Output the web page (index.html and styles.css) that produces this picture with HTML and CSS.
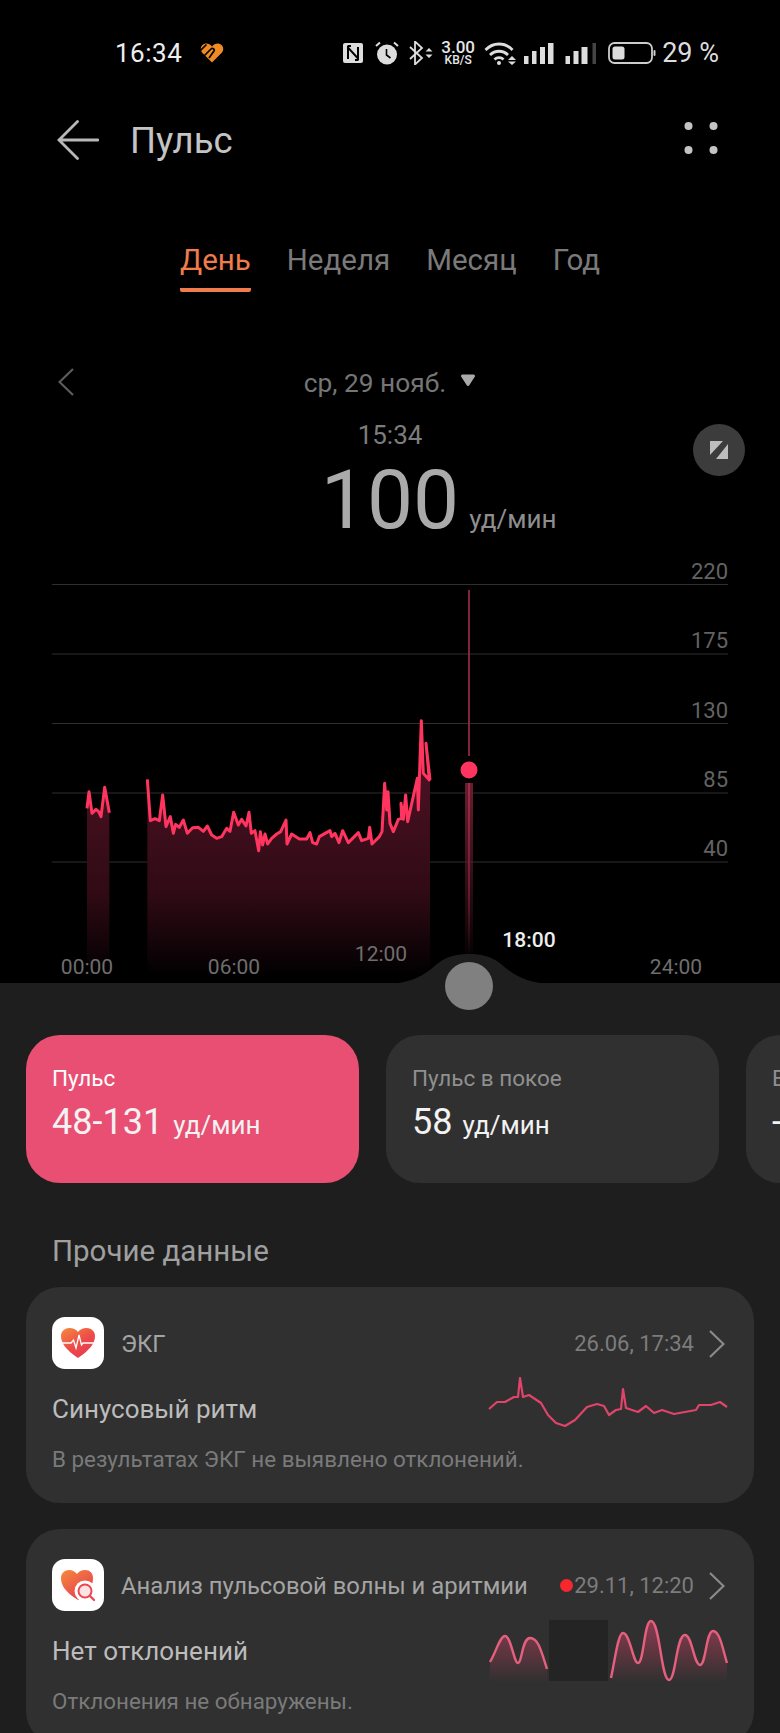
FILE: index.html
```html
<!DOCTYPE html>
<html lang="ru">
<head>
<meta charset="utf-8">
<title>Пульс</title>
<link rel="stylesheet" href="styles.css">
</head>
<body>
<div class="screen">
  <div class="status">
    <div class="status-left">
      <span class="clock">16:34</span>
      <svg class="ic-brand" viewBox="0 0 24 20"><path fill="#f08a24" d="M12 19.500 2 9.500C-.6 6.500 1 1.200 5.600.6 8 .3 10.400 1.500 12 3.500 13.600 1.500 16 .3 18.400.6 23 1.200 24.600 6.500 22 9.500Z"/><path fill="none" stroke="#000" stroke-width="1.700" d="M0 8 6.500 1.500M4 13 11 6C12.500 4.500 15 6 14 8L9 15"/></svg>
    </div>
    <div class="status-right">
      <svg class="ic-nfc" viewBox="0 0 20 22"><rect y="1" width="20" height="20" rx="2" fill="#ddd"/><path fill="none" stroke="#000" stroke-width="2" d="M5 17V5.500L15 16.500V5M8 4H5M15 18h-3"/></svg>
      <svg class="ic-alarm" viewBox="0 0 24 24"><circle cx="12" cy="13.500" r="10" fill="#ddd"/><path fill="none" stroke="#ddd" stroke-width="2" d="M1 5 5 1.500M23 5 19 1.500"/><path fill="none" stroke="#000" stroke-width="1.600" d="M11.500 8v6l4 3"/></svg>
      <svg class="ic-bt" viewBox="0 0 24 24"><path fill="none" stroke="#ddd" stroke-width="1.800" d="M1 6 13 17 6 23.500V.5L13 7 1 18"/><path fill="#ddd" d="M16.500 10.500 20 7l3.500 3.500ZM16.500 13.500h7L20 17Z"/></svg>
      <div class="speed"><span class="speed-n">3.00</span><span class="speed-u">KB/S</span></div>
      <svg class="ic-wifi" viewBox="0 0 33 24"><g fill="none" stroke="#ddd" stroke-width="2.800"><path d="M1.500 9C9 1 21 1 28.500 9"/><path d="M6 14c5-5 13-5 18 0"/><path d="M10.500 18.500c2.500-2.500 6.500-2.500 9 0"/></g><circle cx="15" cy="22" r="2" fill="#ddd"/><path fill="#ddd" d="M24 19h8l-4-4ZM24 20.500h8l-4 3.500Z"/></svg>
      <svg class="ic-sim" viewBox="0 0 30 24"><path fill="#ddd" d="M0 15h4.500v8H0ZM8 10h4.500v13H8ZM16 6h5v17h-5ZM24 2h5.500v21H24Z"/></svg>
      <svg class="ic-sim2" viewBox="0 0 30 24"><path fill="#ddd" d="M0 15h4.500v8H0ZM8 10h5v13H8ZM16 6h6v17h-6Z"/><path fill="#444" d="M27 2h4v21h-4Z"/></svg>
      <svg class="ic-batt" viewBox="0 0 48 24"><rect x="1" y="2" width="43" height="20" rx="5.500" fill="none" stroke="#ccc" stroke-width="1.800"/><rect x="4.500" y="5.500" width="12" height="13" rx="2.500" fill="#ddd"/><rect x="45.500" y="9" width="2" height="6" rx="1" fill="#ccc"/></svg>
      <span class="pct">29 %</span>
    </div>
  </div>

  <header class="appbar">
    <svg class="ic-back" viewBox="0 0 42 40"><path fill="none" stroke="#b8b8b8" stroke-width="2.800" stroke-linecap="round" d="M41 20H2M20.500 1.500 2 20l18.500 18.500"/></svg>
    <h1 class="title">Пульс</h1>
    <svg class="ic-more" viewBox="0 0 34 32"><g fill="#c4c4c4"><circle cx="4.500" cy="4" r="4"/><circle cx="29.500" cy="4" r="4"/><circle cx="4.500" cy="28" r="4"/><circle cx="29.500" cy="28" r="4"/></g></svg>
  </header>

  <nav class="tabs">
    <span class="tab tab-on">День</span>
    <span class="tab">Неделя</span>
    <span class="tab">Месяц</span>
    <span class="tab">Год</span>
  </nav>

  <section class="hero">
    <div class="date-row">
      <svg class="ic-prev" viewBox="0 0 16 28"><path fill="none" stroke="#5c5c5c" stroke-width="2.200" d="M15 1 1.500 14 15 27"/></svg>
      <span class="date">ср, 29 нояб.<svg class="ic-tri" viewBox="0 0 16 13"><path fill="#aaa" stroke="#aaa" stroke-width="3" stroke-linejoin="round" d="M2.500 2h11L8 10.500Z"/></svg></span>
    </div>
    <div class="time">15:34</div>
    <div class="reading">
      <span class="reading-n">100</span>
      <span class="reading-u">уд/мин</span>
    </div>
    <button class="toggle" type="button" aria-label="Развернуть">
      <svg class="ic-toggle" viewBox="0 0 20 18"><path fill="#bdbdbd" d="M1 0h13L1 14ZM19 3v15H7Z"/></svg>
    </button>
  </section>

  <div class="chart">
    <svg class="chart-svg" viewBox="0 560 780 450">
      <defs>
        <linearGradient id="areaGrad" gradientUnits="userSpaceOnUse" x1="0" y1="250" x2="0" y2="860">
          <stop offset="0" stop-color="#4a1122"/>
          <stop offset=".6" stop-color="#2f0a15"/>
          <stop offset="1" stop-color="#2f0a15" stop-opacity="0"/>
        </linearGradient>
        <linearGradient id="barGrad" gradientUnits="userSpaceOnUse" x1="0" y1="783" x2="0" y2="955">
          <stop offset="0" stop-color="#6a1d30"/>
          <stop offset="1" stop-color="#6a1d30" stop-opacity=".05"/>
        </linearGradient>
        <linearGradient id="barCore" gradientUnits="userSpaceOnUse" x1="0" y1="783" x2="0" y2="955">
          <stop offset="0" stop-color="#a02c48"/>
          <stop offset=".6" stop-color="#6a1d30"/>
          <stop offset="1" stop-color="#6a1d30" stop-opacity="0"/>
        </linearGradient>
      </defs>
      <g stroke="#2e2e2e" stroke-width="1.200">
        <path d="M52 584.500H728M52 654H728M52 723.500H728M52 793H728M52 862H728"/>
      </g>
      <g class="axis-y" text-anchor="end">
        <text x="728" y="579">220</text>
        <text x="728" y="648">175</text>
        <text x="728" y="718">130</text>
        <text x="728" y="787">85</text>
        <text x="728" y="856">40</text>
      </g>
      <g transform="translate(40 690) scale(.33333)">
        <path fill="url(#areaGrad)" d="M141 355 147 305 156 370 168 358 176 365 183 380 194 292 208 368V850H141Z"/>
        <path fill="url(#areaGrad)" d="M322 268 331 392 345 386 358 392 368 315 378 410 391 380 400 430 407 403 418 412 430 390 442 430 458 413 475 412 490 424 502 408 515 435 530 445 545 440 560 415 570 424 581 367 595 405 605 388 618 408 627 367 634 430 645 422 656 482 661 425 668 465 675 432 683 462 695 445 710 432 722 425 738 390 741 462 755 432 778 447 800 447 810 428 818 458 830 462 838 440 870 422 875 440 885 430 897 458 908 422 925 458 955 428 965 452 985 445 989 412 996 462 1018 440 1026 425 1034 280 1040 360 1044 305 1050 400 1060 425 1075 388 1085 385 1083 340 1090 388 1097 315 1103 395 1132 265 1135 360 1144 92 1150 250 1168 270 1158 160 1170 270V850H322Z"/>
        <g fill="none" stroke="#ff3560" stroke-width="9" stroke-linejoin="round">
          <path d="M141 355 147 305 156 370 168 358 176 365 183 380 194 292 208 368"/>
          <path d="M322 268 331 392 345 386 358 392 368 315 378 410 391 380 400 430 407 403 418 412 430 390 442 430 458 413 475 412 490 424 502 408 515 435 530 445 545 440 560 415 570 424 581 367 595 405 605 388 618 408 627 367 634 430 645 422 656 482 661 425 668 465 675 432 683 462 695 445 710 432 722 425 738 390 741 462 755 432 778 447 800 447 810 428 818 458 830 462 838 440 870 422 875 440 885 430 897 458 908 422 925 458 955 428 965 452 985 445 989 412 996 462 1018 440 1026 425 1034 280 1040 360 1044 305 1050 400 1060 425 1075 388 1085 385 1083 340 1090 388 1097 315 1103 395 1132 265 1135 360 1144 92 1150 250 1168 270 1158 160 1170 270"/>
        </g>
      </g>
      <path d="M469 590V756" stroke="#b02e4c" stroke-width="1.500"/>
      <circle cx="469" cy="770" r="8.500" fill="#ff3560"/>
      <rect x="465" y="783" width="8" height="172" fill="url(#barGrad)"/>
      <rect x="468" y="783" width="2" height="172" fill="url(#barCore)"/>
      <path d="M385 984C410 984 425 975 437 964 447 956 458 954 469 954 480 954 491 956 501 964 513 975 528 984 553 984Z" fill="#1e1e1e"/>
      <circle cx="469" cy="986" r="24" fill="#808080"/>
      <g class="axis-x" text-anchor="middle">
        <text x="87" y="974">00:00</text>
        <text x="234" y="974">06:00</text>
        <text x="381" y="961">12:00</text>
        <text class="axis-now" x="529" y="947">18:00</text>
        <text x="676" y="974">24:00</text>
      </g>
    </svg>
  </div>

  <main class="panel">
    <div class="stats">
      <div class="stat stat-on">
        <div class="stat-label">Пульс</div>
        <div class="stat-value">48-131<span class="stat-unit">уд/мин</span></div>
      </div>
      <div class="stat">
        <div class="stat-label">Пульс в покое</div>
        <div class="stat-value">58<span class="stat-unit">уд/мин</span></div>
      </div>
      <div class="stat">
        <div class="stat-label">Вариабельность</div>
        <div class="stat-value">--</div>
      </div>
    </div>

    <h2 class="section">Прочие данные</h2>

    <article class="card">
      <div class="card-head">
        <span class="app-icon">
          <svg viewBox="0 0 52 52">
            <defs><linearGradient id="h1" x1="0" y1="0" x2="0.7" y2="1"><stop offset="0" stop-color="#f58a3c"/><stop offset=".6" stop-color="#ec4a4a"/><stop offset="1" stop-color="#e73c50"/></linearGradient></defs>
            <path fill="url(#h1)" d="M26 41C14 33 9 26 9 19 9 14 13 11 17.500 11 21 11 24 12.500 26 15 28 12.500 31 11 34.500 11 39 11 43 14 43 19 43 26 38 33 26 41Z"/>
            <path fill="none" stroke="#fff" stroke-width="1.300" d="M10 26h9l2.500-3 2.500 8 3-13 2.500 10 1.500-2H42"/>
          </svg>
        </span>
        <span class="card-title">ЭКГ</span>
        <span class="card-date">26.06, 17:34</span>
        <svg class="ic-next" viewBox="0 0 16 28"><path fill="none" stroke="#8a8a8a" stroke-width="2.200" d="M1 1 14.500 14 1 27"/></svg>
      </div>
      <div class="card-row">
        <span class="card-main">Синусовый ритм</span>
        <svg class="spark" viewBox="485 1377 245 64"><path fill="none" stroke="#e0446a" stroke-width="2.200" stroke-linejoin="round" d="M489 1409 497 1402 505 1402 514 1397 518 1397 520 1378 523 1397 529 1395 541 1403 548 1415 556 1423 565 1426 575 1420 587 1407 597 1404 604 1406 609 1415 616 1410 621 1409 623 1389 626 1408 638 1412 646 1406 654 1413 662 1410 674 1414 696 1410 699 1405 711 1405 720 1402 727 1407"/></svg>
      </div>
      <p class="card-sub">В результатах ЭКГ не выявлено отклонений.</p>
    </article>

    <article class="card">
      <div class="card-head">
        <span class="app-icon">
          <svg viewBox="0 0 52 52">
            <defs><linearGradient id="h2" x1="0" y1="0" x2="0.7" y2="1"><stop offset="0" stop-color="#f58a3c"/><stop offset="1" stop-color="#e73c50"/></linearGradient></defs>
            <path fill="url(#h2)" d="M26 41C13 33 9 26 9 19 9 14 13 11 17 11 20.500 11 22.500 12.500 25 15 27 12.500 29.500 11 33 11 38 11 41 14 41 19 41 26 38 33 26 41Z"/>
            <circle cx="33" cy="32" r="10.500" fill="#fff"/>
            <circle cx="33" cy="32" r="6.500" fill="#fde3e3" stroke="#e9484f" stroke-width="2"/>
            <path stroke="#e9484f" stroke-width="2.400" stroke-linecap="round" d="M38 37 42 41"/>
          </svg>
        </span>
        <span class="card-title">Анализ пульсовой волны и аритмии</span>
        <span class="card-date card-date-new">29.11, 12:20</span>
        <svg class="ic-next" viewBox="0 0 16 28"><path fill="none" stroke="#8a8a8a" stroke-width="2.200" d="M1 1 14.500 14 1 27"/></svg>
      </div>
      <div class="card-row">
        <span class="card-main">Нет отклонений</span>
        <svg class="spark" viewBox="485 1619 245 64">
          <defs><linearGradient id="waveGrad" gradientUnits="userSpaceOnUse" x1="0" y1="1625" x2="0" y2="1682"><stop offset="0" stop-color="#e0446a" stop-opacity=".5"/><stop offset="1" stop-color="#e0446a" stop-opacity="0"/></linearGradient></defs>
          <path fill="url(#waveGrad)" d="M490 1662C496 1652 500 1636 505 1636 511 1636 514 1663 518 1663 522 1663 522 1638 530 1638 538 1638 541 1650 547 1669V1682H490Z"/>
          <path fill="url(#waveGrad)" d="M611 1678C615 1660 618 1633 623 1633 630 1633 633 1663 638 1663 644 1663 644 1621 651 1621 660 1621 661 1680 669 1680 676 1680 676 1635 685 1635 692 1635 694 1665 700 1665 706 1665 706 1631 713 1631 720 1631 723 1650 727 1663V1682H611Z"/>
          <g fill="none" stroke="#e5607f" stroke-width="2.400">
            <path d="M490 1662C496 1652 500 1636 505 1636 511 1636 514 1663 518 1663 522 1663 522 1638 530 1638 538 1638 541 1650 547 1669"/>
            <path d="M611 1678C615 1660 618 1633 623 1633 630 1633 633 1663 638 1663 644 1663 644 1621 651 1621 660 1621 661 1680 669 1680 676 1680 676 1635 685 1635 692 1635 694 1665 700 1665 706 1665 706 1631 713 1631 720 1631 723 1650 727 1663"/>
          </g>
          <rect x="549" y="1620" width="59" height="61" fill="#242424"/>
        </svg>
      </div>
      <p class="card-sub">Отклонения не обнаружены.</p>
    </article>
  </main>
</div>
</body>
</html>
```

FILE: styles.css
```css
* { box-sizing: border-box; }
html, body { margin: 0; padding: 0; background: #000; }
body { font-family: Roboto, "Noto Sans", sans-serif; color: #ddd; }
svg { display: block; }

.screen { width: 780px; height: 1733px; overflow: hidden; background: #000; }

/* status bar */
.status { display: flex; justify-content: space-between; align-items: center; height: 24px; margin-top: 41px; padding: 0 61px 0 115px; }
.status-left { display: flex; align-items: center; }
.status-right { display: flex; align-items: center; }
.clock { font-size: 26px; line-height: 24px; letter-spacing: .5px; color: #eee; }
.ic-brand { width: 24px; height: 20px; margin-left: 18px; }
.ic-nfc { width: 20px; height: 22px; }
.ic-alarm { width: 24px; height: 24px; margin-left: 12px; }
.ic-bt { width: 24px; height: 24px; margin-left: 10px; }
.speed { display: flex; flex-direction: column; align-items: center; width: 38px; margin-left: 6px; color: #e6e6e6; }
.speed-n { font-size: 17px; line-height: 14px; font-weight: 500; }
.speed-u { font-size: 12px; line-height: 12px; font-weight: 500; }
.ic-wifi { width: 33px; height: 24px; margin-left: 7px; }
.ic-sim { width: 30px; height: 24px; margin-left: 7px; }
.ic-sim2 { width: 31px; height: 24px; margin-left: 11px; }
.ic-batt { width: 48px; height: 24px; margin-left: 12px; }
.pct { font-size: 27px; line-height: 24px; margin-left: 6px; color: #ddd; white-space: nowrap; }

/* app bar */
.appbar { display: flex; align-items: center; height: 44px; margin-top: 53px; padding: 0 62px 0 57px; }
.ic-back { width: 42px; height: 40px; }
.title { flex: 1; margin: 2px 0 0 31px; font-size: 36.5px; line-height: 44px; font-weight: 400; color: #c4c4c4; }
.ic-more { width: 34px; height: 32px; margin-top: -4px; }

/* tabs */
.tabs { display: flex; justify-content: center; gap: 36px; margin-top: 80px; }
.tab { font-size: 29.5px; line-height: 36px; height: 50px; color: #7a7a7a; }
.tab-on { color: #f07c4d; background: linear-gradient(#f07c4d, #f07c4d) no-repeat bottom / 100% 4px; border-radius: 2px; }

/* hero */
.hero { position: relative; }
.date-row { position: relative; display: flex; justify-content: center; align-items: center; height: 32px; margin-top: 75px; }
.ic-prev { position: absolute; left: 58px; top: 1px; width: 16px; height: 28px; }
.date { display: flex; align-items: center; gap: 14px; font-size: 26.3px; line-height: 32px; color: #757575; }
.ic-tri { width: 16px; height: 13px; margin-top: -6px; }
.time { margin-top: 19px; font-size: 26px; line-height: 34px; text-align: center; color: #7c7c7c; }
.reading { display: grid; grid-template-columns: 1fr auto 1fr; align-items: baseline; height: 84px; margin-top: 6px; line-height: 84px; }
.reading-n { grid-column: 2; font-size: 82px; font-weight: 400; color: #aaa; }
.reading-u { grid-column: 3; margin-left: 10px; font-size: 26px; color: #8e8e8e; }
.toggle { position: absolute; top: 57px; right: 35px; display: flex; align-items: center; justify-content: center; width: 52px; height: 52px; padding: 0; border: 0; border-radius: 50%; background: #3c3c3c; }
.ic-toggle { width: 20px; height: 18px; }

/* chart */
.chart { position: relative; height: 441px; }
.chart-svg { position: absolute; left: 0; top: 18px; z-index: 2; width: 780px; height: 450px; }
.axis-y text { font-size: 22px; fill: #636363; font-family: Roboto, sans-serif; }
.axis-x text { font-size: 21px; fill: #6e6e6e; font-family: Roboto, sans-serif; }
.axis-x .axis-now { fill: #eee; font-weight: 500; }

/* panel */
.panel { height: 750px; padding-top: 52px; background: #1e1e1e; overflow: hidden; }
.stats { display: flex; gap: 27px; padding-left: 26px; width: 780px; overflow: hidden; }
.stat { flex: 0 0 333px; height: 148px; padding: 29px 26px 0; border-radius: 34px; background: #303030; }
.stat-on { background: #e84f72; }
.stat-label { font-size: 22.5px; line-height: 28px; color: #8f8f8f; white-space: nowrap; }
.stat-on .stat-label { color: #fff; }
.stat-value { margin-top: 8px; font-size: 36px; line-height: 44px; color: #f2f2f2; }
.stat-unit { margin-left: 10px; font-size: 26px; }
.section { margin: 50px 0 18px 52px; font-size: 29.5px; line-height: 36px; font-weight: 400; color: #a0a0a0; }
.card { height: 216px; margin: 0 26px 26px; padding: 30px 24px 0 26px; border-radius: 34px; background: #303030; }
.card-head { display: flex; align-items: center; height: 52px; }
.app-icon { flex: none; width: 52px; height: 52px; border-radius: 13px; background: #fff; overflow: hidden; }
.card-title { flex: 1; margin: 2px 0 0 17px; font-size: 23.8px; line-height: 32px; color: #a4a4a4; white-space: nowrap; }
.card-date { position: relative; font-size: 22px; line-height: 30px; color: #7c7c7c; margin-top: 2px; }
.card-date-new::before { content: ""; position: absolute; left: -14px; top: 8px; width: 13px; height: 13px; border-radius: 50%; background: #f5272f; }
.ic-next { width: 16px; height: 28px; margin: 2px 5px 0 15px; }
.card-row { display: flex; align-items: center; justify-content: space-between; height: 34px; margin-top: 23px; }
.card-main { font-size: 26px; line-height: 34px; color: #bcbcbc; }
.spark { flex: none; width: 245px; height: 64px; }
.card-sub { margin: 19px 0 0; font-size: 22.4px; line-height: 28px; color: #7a7a7a; }
```
